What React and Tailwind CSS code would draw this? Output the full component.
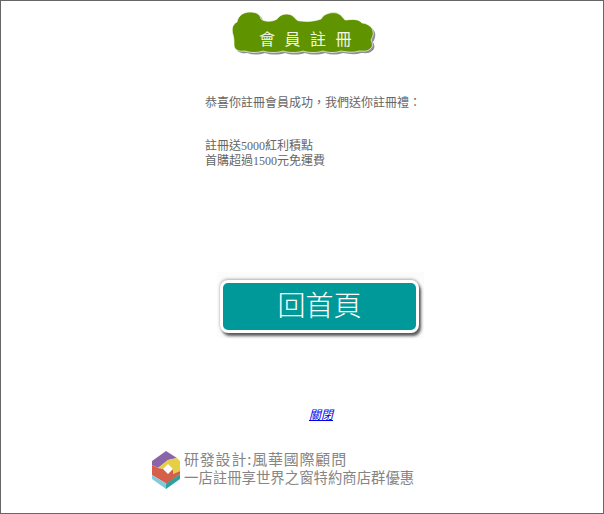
import React from 'react'

function CloudBadge() {
  const cloud = 'M2 24 C0 17 2 13 6 11 C7 5 12 1 19 1 C25 1 29 3 30 8 C34 11 41 11 46 8 C50 2 58 2 62 5 C65 9 67 10 70 10 C78 11 84 10 90 8 C93 2 103 0 108 3 C112 5 112 9 115 9 C122 8 128 8 131 12 C135 12 141 15 142 20 C143 24 141 27 140 29 C142 33 142 36 139 38 C136 41 132 40 128 40 C122 42 116 41 110 40 C104 42 98 42 92 40 C86 42 78 42 72 40 C66 42 58 42 52 40 C46 42 38 42 32 40 C26 42 20 42 14 40 C8 41 3 39 3 34 C3 30 3 27 2 24 Z'
  return (
    <div className="relative w-[146px] h-[45px] ml-[230px]">
      <svg width="146" height="45" viewBox="0 0 146 45" className="absolute inset-0">
        <path d={cloud} fill="#8f8d95" transform="translate(2,2)" />
        <path d={cloud} fill="#5f9300" stroke="#ffffff" strokeWidth="0.7" />
      </svg>
      <div className="absolute left-[28px] top-[19px] flex gap-[9.5px] text-[16px] leading-[16px] text-[#f4f7e6] font-['Noto_Sans_CJK_TC',sans-serif]">
        <span>會</span><span>員</span><span>註</span><span>冊</span>
      </div>
    </div>
  )
}

function Logo() {
  return (
    <svg width="28" height="38" viewBox="0 0 28 38" className="shrink-0 mt-[1px]">
      <path d="M14 0 L25 7 L16 9 L6 17 L0 14 L0 10 Z" fill="#8a66a8" />
      <path d="M6 17 L16 9 L25 7 L28 10 L28 20 L21 23 L21 18 L16 13 L11 18 Z" fill="#e5cf45" />
      <path d="M0 14 L6 17 L11 18 L16 23 L21 18 L21 23 L28 20 L28 23 L15 33 L0 24 Z" fill="#d5604a" />
      <path d="M0 24 L15 33 L14 38 L0 28 Z" fill="#86c8dc" />
      <path d="M14 33 L28 23 L28 28 L14 38 Z" fill="#2aa39f" />
    </svg>
  )
}

export default function App() {
  return (
    <div className="w-[604px] h-[514px] border border-[#666666] bg-white overflow-hidden font-['Liberation_Serif','Noto_Sans_CJK_TC',serif]">
      <div className="pt-[10px]">
        <CloudBadge />
      </div>

      <p className="ml-[204px] mt-[40px] text-[12px] leading-[14px] text-[#666666] whitespace-nowrap">
        恭喜你註冊會員成功，我們送你註冊禮：
      </p>
      <p className="ml-[204px] mt-[29px] text-[12px] leading-[15px] text-[#666666] whitespace-nowrap">
        註冊送5000紅利積點
        <br />
        首購超過1500元免運費
      </p>

      <div className="ml-[216px] mt-[103px] w-[207px] h-[66px] bg-[#fcfcfc] pl-[3px] pt-[8px]">
        <button className="w-[199px] h-[53px] flex items-center justify-center pb-[5px] rounded-[8px] border-[3px] border-white bg-[#009999] shadow-[2px_3px_3px_rgba(60,60,60,0.85),0_-1px_3px_rgba(120,120,120,0.6)] text-[28px] text-white font-['Noto_Sans_CJK_TC',sans-serif] font-light leading-none">
          回首頁
        </button>
      </div>

      <div className="ml-[308px] mt-[70px] h-[14px] text-[12px] leading-[14px]">
        <a href="#" className="italic underline text-[#0000ee]">關閉</a>
      </div>

      <div className="ml-[151px] mt-[28px] flex items-start gap-[4px]">
        <Logo />
        <div className="font-['Noto_Sans_CJK_TC',sans-serif] text-[#858585] whitespace-nowrap">
          <div className="text-[15px] leading-[18px] tracking-[0.8px]">研發設計:風華國際顧問</div>
          <div className="text-[14.4px] leading-[18px]">一店註冊享世界之窗特約商店群優惠</div>
        </div>
      </div>
    </div>
  )
}
